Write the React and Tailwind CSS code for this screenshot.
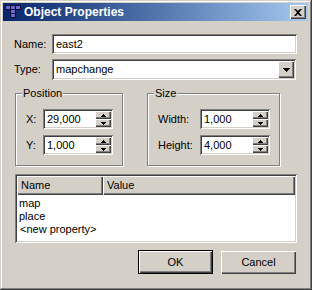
const raised = 'shadow-[inset_1px_1px_0_#ffffff,inset_-1px_-1px_0_#404040,inset_-2px_-2px_0_#808080]'
const sunken = 'shadow-[inset_1px_1px_0_#808080,inset_-1px_-1px_0_#ffffff,inset_2px_2px_0_#404040,inset_-2px_-2px_0_#d4d0c8]'

const Arrow = ({ up }) => (
  <svg width="7" height="4" viewBox="0 0 7 4">
    {up ? <path d="M3 0h1v1h1v1h1v1H1V2h1V1h1z" fill="#000" /> : <path d="M0 0h7v1H6v1H5v1H4v1H3V3H2V2H1V1H0z" fill="#000" />}
  </svg>
)

const SmallArrow = ({ up }) => (
  <svg width="5" height="3" viewBox="0 0 5 3">
    {up ? <path d="M2 0h1v1h1v1h1v1H0V2h1V1h1z" fill="#000" /> : <path d="M0 0h5v1H4v1H3v1H2V2H1V1H0z" fill="#000" />}
  </svg>
)

const SpinField = ({ value }) => (
  <div className={`w-[70px] h-[20px] bg-white ${sunken} flex items-center pl-[4px] pr-[2px]`}>
    <span className="flex-1 text-[11px] leading-none">{value}</span>
    <div className="flex flex-col w-[16px] h-[16px]">
      <div className={`h-[8px] bg-[#d4d0c8] ${raised} flex items-center justify-center`}>
        <SmallArrow up />
      </div>
      <div className={`h-[8px] bg-[#d4d0c8] ${raised} flex items-center justify-center`}>
        <SmallArrow />
      </div>
    </div>
  </div>
)

const Group = ({ title, className, children }) => (
  <div className={`relative border border-[#808080] shadow-[inset_1px_1px_0_#ffffff,1px_1px_0_#ffffff] ${className}`}>
    <span className="absolute left-[6px] top-[-7px] bg-[#d4d0c8] px-[1px] text-[11px] leading-[13px]">{title}</span>
    {children}
  </div>
)

export default function App() {
  return (
    <div
      className="w-[312px] h-[290px] bg-[#d4d0c8] p-[3px] pr-[4px] text-black shadow-[inset_-1px_-1px_0_#404040,inset_1px_1px_0_#d4d0c8,inset_-2px_-2px_0_#808080,inset_2px_2px_0_#ffffff]"
      style={{ fontFamily: '"Liberation Sans", Arial, sans-serif' }}
    >
      {/* title bar */}
      <div className="h-[18px] flex items-center bg-gradient-to-r from-[#0a246a] to-[#a6caf0] pl-[2px] pr-[2px]">
        <svg width="16" height="14" viewBox="0 0 16 14" className="mr-[3px]">
          <g fill="#6a6ac8" stroke="#101040" strokeWidth="1">
            <rect x="0.5" y="0.5" width="5" height="4" />
            <rect x="5.5" y="0.5" width="5" height="4" />
            <rect x="10.5" y="0.5" width="5" height="4" />
            <rect x="5.5" y="4.5" width="5" height="4" />
            <rect x="5.5" y="8.5" width="5" height="4" />
          </g>
        </svg>
        <span className="flex-1 text-white font-bold text-[12px] leading-none">Object Properties</span>
        <div className={`w-[16px] h-[14px] bg-[#d4d0c8] ${raised} flex items-center justify-center`}>
          <svg width="8" height="7" viewBox="0 0 8 7">
            <path d="M0 0h2l2 2 2-2h2L5 3.5 8 7H6L4 5 2 7H0l3-3.5z" fill="#000" />
          </svg>
        </div>
      </div>

      <div className="pl-[11px] pr-[11px]">
        {/* name */}
        <div className="mt-[13px] flex items-center">
          <span className="w-[38px] text-[11px]">Name:</span>
          <div className={`flex-1 h-[20px] bg-white ${sunken} flex items-center px-[4px] text-[11px]`}>east2</div>
        </div>

        {/* type */}
        <div className="mt-[5px] flex items-center pr-[1px]">
          <span className="w-[38px] text-[11px]">Type:</span>
          <div className={`flex-1 h-[21px] bg-white ${sunken} flex items-center pl-[4px] pr-[2px] text-[11px]`}>
            <span className="flex-1">mapchange</span>
            <div className={`w-[16px] h-[17px] bg-[#d4d0c8] ${raised} flex items-center justify-center`}>
              <Arrow />
            </div>
          </div>
        </div>

        {/* groups */}
        <div className="mt-[13px] flex gap-[24px] pl-[1px]">
          <Group title="Position" className="w-[108px] h-[73px] pt-[15px] pl-[10px]">
            <div className="flex items-center">
              <span className="w-[17px] text-[11px]">X:</span>
              <SpinField value="29,000" />
            </div>
            <div className="flex items-center mt-[6px]">
              <span className="w-[17px] text-[11px]">Y:</span>
              <SpinField value="1,000" />
            </div>
          </Group>
          <Group title="Size" className="w-[133px] h-[73px] pt-[15px] pl-[10px]">
            <div className="flex items-center">
              <span className="w-[42px] text-[11px]">Width:</span>
              <SpinField value="1,000" />
            </div>
            <div className="flex items-center mt-[6px]">
              <span className="w-[42px] text-[11px]">Height:</span>
              <SpinField value="4,000" />
            </div>
          </Group>
        </div>

        {/* property table */}
        <div className={`mt-[8px] ml-[1px] h-[69px] bg-white ${sunken} p-[2px] flex flex-col`}>
          <div className="flex h-[19px] text-[11px]">
            <div className={`w-[86px] bg-[#d4d0c8] ${raised} flex items-center pl-[4px]`}>Name</div>
            <div className={`flex-1 bg-[#d4d0c8] ${raised} flex items-center pl-[4px]`}>Value</div>
          </div>
          <div className="pl-[2px] pt-[2px] text-[11px] leading-[13px]">
            <div>map</div>
            <div>place</div>
            <div className="pl-[1px]">&lt;new property&gt;</div>
          </div>
        </div>

        {/* buttons */}
        <div className="mt-[7px] flex justify-end gap-[8px] pr-[1px]">
          <div className="w-[75px] h-[24px] border border-black">
            <div className={`w-full h-full bg-[#d4d0c8] ${raised} flex items-center justify-center text-[11px]`}>OK</div>
          </div>
          <div className={`w-[75px] h-[23px] mt-[1px] bg-[#d4d0c8] ${raised} flex items-center justify-center text-[11px]`}>Cancel</div>
        </div>
      </div>
    </div>
  )
}
